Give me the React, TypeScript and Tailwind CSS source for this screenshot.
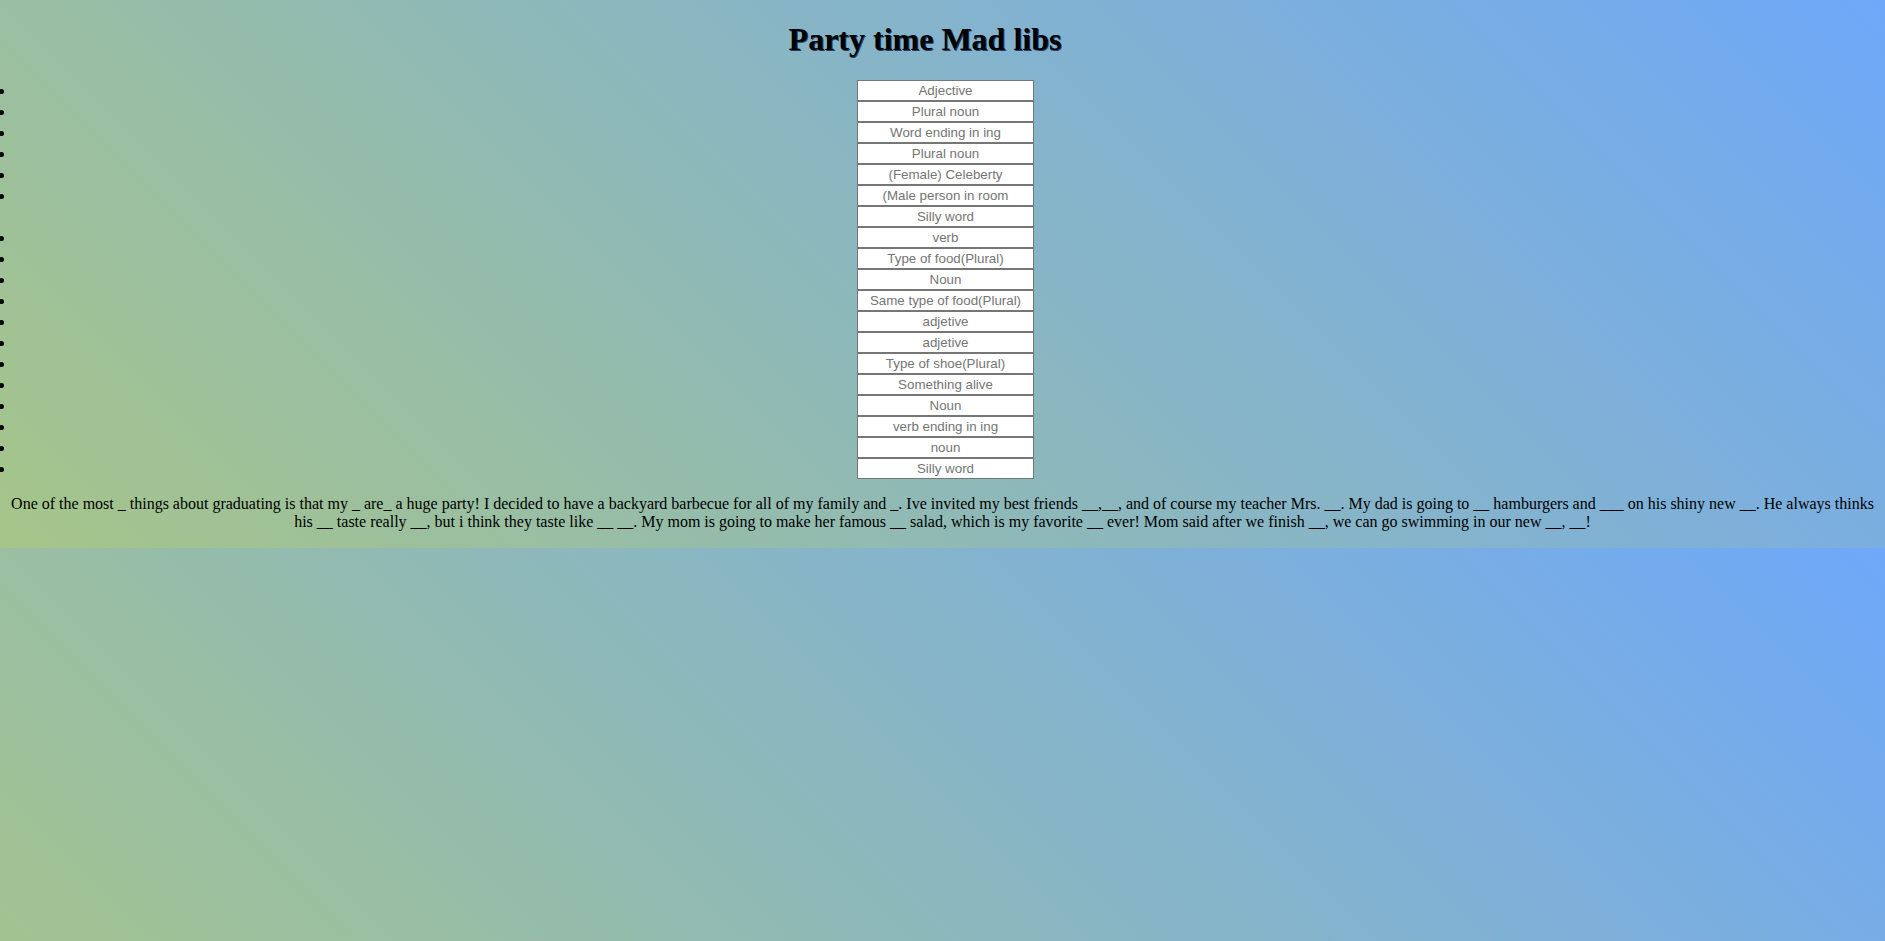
import React from 'react';

const fields: { label: string; bullet: boolean }[] = [
  { label: 'Adjective', bullet: true },
  { label: 'Plural noun', bullet: true },
  { label: 'Word ending in ing', bullet: true },
  { label: 'Plural noun', bullet: true },
  { label: '(Female) Celeberty', bullet: true },
  { label: '(Male person in room', bullet: true },
  { label: 'Silly word', bullet: false },
  { label: 'verb', bullet: true },
  { label: 'Type of food(Plural)', bullet: true },
  { label: 'Noun', bullet: true },
  { label: 'Same type of food(Plural)', bullet: true },
  { label: 'adjetive', bullet: true },
  { label: 'adjetive', bullet: true },
  { label: 'Type of shoe(Plural)', bullet: true },
  { label: 'Something alive', bullet: true },
  { label: 'Noun', bullet: true },
  { label: 'verb ending in ing', bullet: true },
  { label: 'noun', bullet: true },
  { label: 'Silly word', bullet: true },
];

const story =
  'One of the most _ things about graduating is that my _ are_ a huge party! I decided to have a backyard barbecue for all of my family and _. Ive invited my best friends __,__, and of course my teacher Mrs. __. My dad is going to __ hamburgers and ___ on his shiny new __. He always thinks his __ taste really __, but i think they taste like __ __. My mom is going to make her famous __ salad, which is my favorite __ ever! Mom said after we finish __, we can go swimming in our new __, __!';

export default function App() {
  return (
    <div className="min-h-screen pt-[21.44px] leading-[normal] text-black font-['Liberation_Serif','Times_New_Roman',serif] text-[16px] bg-[linear-gradient(45deg,#a6c589,#6ea8f8)] bg-[length:100%_548px] bg-repeat">
      <h1 className="mt-0 mb-[21.44px] pr-[35px] text-center text-[32px] font-bold [text-shadow:1px_1px_0_#1f3f66]">
        Party time Mad libs
      </h1>
      <ul className="my-4 pl-[15px] list-disc">
        {fields.map((f, i) => (
          <li
            key={i}
            className={`h-[21px] leading-[21px] text-center pr-[9px] ${f.bullet ? 'list-disc' : 'list-none'}`}
          >
            <input
              type="text"
              placeholder={f.label}
              className="inline-block align-top w-[177px] h-[21px] px-[2px] py-[1px] border border-[#767676] bg-white text-center text-[13.33px] font-['Liberation_Sans',Arial,sans-serif] text-black placeholder:text-[#757575] outline-none"
            />
          </li>
        ))}
      </ul>
      <p className="my-4 text-center">{story}</p>
    </div>
  );
}
